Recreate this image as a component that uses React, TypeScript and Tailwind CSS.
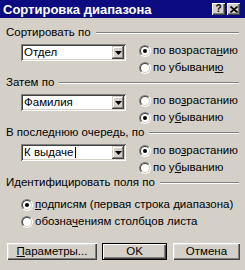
import React from 'react';

const Radio = ({ checked }: { checked?: boolean }) => (
  <div className="w-[12px] h-[12px] shrink-0 rounded-full border border-t-[#808080] border-l-[#808080] border-r-white border-b-white">
    <div className="w-full h-full rounded-full border border-t-[#404040] border-l-[#404040] border-r-[#d4d0c8] border-b-[#d4d0c8] bg-white flex items-center justify-center">
      {checked && <div className="w-[4px] h-[4px] rounded-full bg-black" />}
    </div>
  </div>
);

const RadioRow = ({ checked, children }: { checked?: boolean; children: React.ReactNode }) => (
  <div className="h-[17px] flex items-center gap-[2px] whitespace-nowrap">
    <Radio checked={checked} />
    <span>{children}</span>
  </div>
);

const GroupHeader = ({ label }: { label: string }) => (
  <div className="h-[12px] flex items-center gap-[5px] pr-[1px]">
    <span className="whitespace-nowrap leading-none">{label}</span>
    <div className="flex-1 h-[2px] border-t border-t-[#808080] border-b border-b-white" />
  </div>
);

const Combo = ({ value, caret }: { value: string; caret?: boolean }) => (
  <div className="w-[105px] h-[17px] mt-[2px] bg-white flex items-stretch p-[2px] shadow-[inset_1px_1px_#808080,inset_-1px_-1px_#ffffff,inset_2px_2px_#404040,inset_-2px_-2px_#d4d0c8]">
    <div className="flex-1 flex items-center pl-[1px] leading-none">
      <span>{value}</span>
      {caret && <span className="w-[1px] h-[11px] bg-black ml-[1px]" />}
    </div>
    <div className="w-[12px] bg-[#d4d0c8] flex items-center justify-center shadow-[inset_-1px_-1px_#404040,inset_1px_1px_#d4d0c8,inset_-2px_-2px_#808080,inset_2px_2px_#ffffff]">
      <svg width="7" height="4" viewBox="0 0 7 4">
        <path d="M0 0H7L3.5 4Z" fill="#000" />
      </svg>
    </div>
  </div>
);

const SortSection = ({
  label,
  value,
  descending,
  caret,
  ascLabel,
  descLabel,
}: {
  label: string;
  value: string;
  descending?: boolean;
  caret?: boolean;
  ascLabel: React.ReactNode;
  descLabel: React.ReactNode;
}) => (
  <div className="h-[50px]">
    <GroupHeader label={label} />
    <div className="flex mt-[3px] pl-[15px]">
      <Combo value={value} caret={caret} />
      <div className="ml-[13px]">
        <RadioRow checked={!descending}>{ascLabel}</RadioRow>
        <RadioRow checked={descending}>{descLabel}</RadioRow>
      </div>
    </div>
  </div>
);

const Button = ({ children, width, isDefault }: { children: React.ReactNode; width: string; isDefault?: boolean }) => (
  <div
    className={`${width} h-[17px] flex items-center justify-center bg-[#d4d0c8] ${
      isDefault
        ? 'border border-black shadow-[inset_1px_1px_#ffffff,inset_-1px_-1px_#404040,inset_-2px_-2px_#808080]'
        : 'shadow-[inset_1px_1px_#ffffff,inset_-1px_-1px_#404040,inset_-2px_-2px_#808080,inset_2px_2px_#dfdfdf]'
    }`}
  >
    {children}
  </div>
);

const TitleButton = ({ children }: { children: React.ReactNode }) => (
  <div className="w-[13px] h-[12px] bg-[#d4d0c8] flex items-center justify-center shadow-[inset_1px_1px_#ffffff,inset_-1px_-1px_#404040,inset_-2px_-2px_#808080]">
    {children}
  </div>
);

export default function App() {
  return (
    <div className="w-[245px] h-[270px] overflow-hidden bg-[#d4d0c8] text-black text-[11.5px] font-['Liberation_Sans',Arial,sans-serif]">
      {/* Заголовок окна */}
      <div className="h-[18px] bg-[#0c0c80] flex items-center justify-between pl-[3px] pr-[5px]">
        <span className="text-white font-bold text-[13px] leading-none">Сортировка диапазона</span>
        <div className="flex gap-[2px]">
          <TitleButton>
            <span className="font-bold text-[10px] leading-none">?</span>
          </TitleButton>
          <TitleButton>
            <svg width="8" height="7" viewBox="0 0 8 7">
              <path d="M0.5 0.5L7.5 6.5M7.5 0.5L0.5 6.5" stroke="#000" strokeWidth="1.6" />
            </svg>
          </TitleButton>
        </div>
      </div>

      <div className="pl-[6px] pr-[5px] pt-[9px]">
        <SortSection
          label="Сортировать по"
          value="Отдел"
          ascLabel={<>по возраста<u>н</u>ию</>}
          descLabel={<>по убывани<u>ю</u></>}
        />
        <SortSection
          label="Затем по"
          value="Фамилия"
          descending
          ascLabel={<>по во<u>з</u>растанию</>}
          descLabel={<>по у<u>б</u>ыванию</>}
        />
        <SortSection
          label="В последнюю очередь, по"
          value="К выдаче"
          caret
          ascLabel={<>по во<u>з</u>растанию</>}
          descLabel={<>по у<u>б</u>ыванию</>}
        />

        {/* Идентификация полей */}
        <GroupHeader label="Идентифицировать поля по" />
        <div className="mt-[7px] pl-[15px]">
          <RadioRow checked>
            <u>п</u>одписям (первая строка диапазона)
          </RadioRow>
          <RadioRow>
            обозна<u>ч</u>ениям столбцов листа
          </RadioRow>
        </div>

        <div className="flex mt-[13px] pl-[1px]">
          <Button width="w-[90px]">
            <u>П</u>араметры...
          </Button>
          <div className="ml-[5px]">
            <Button width="w-[65px]" isDefault>
              OK
            </Button>
          </div>
          <div className="ml-[6px]">
            <Button width="w-[67px]">Отмена</Button>
          </div>
        </div>
      </div>
    </div>
  );
}
